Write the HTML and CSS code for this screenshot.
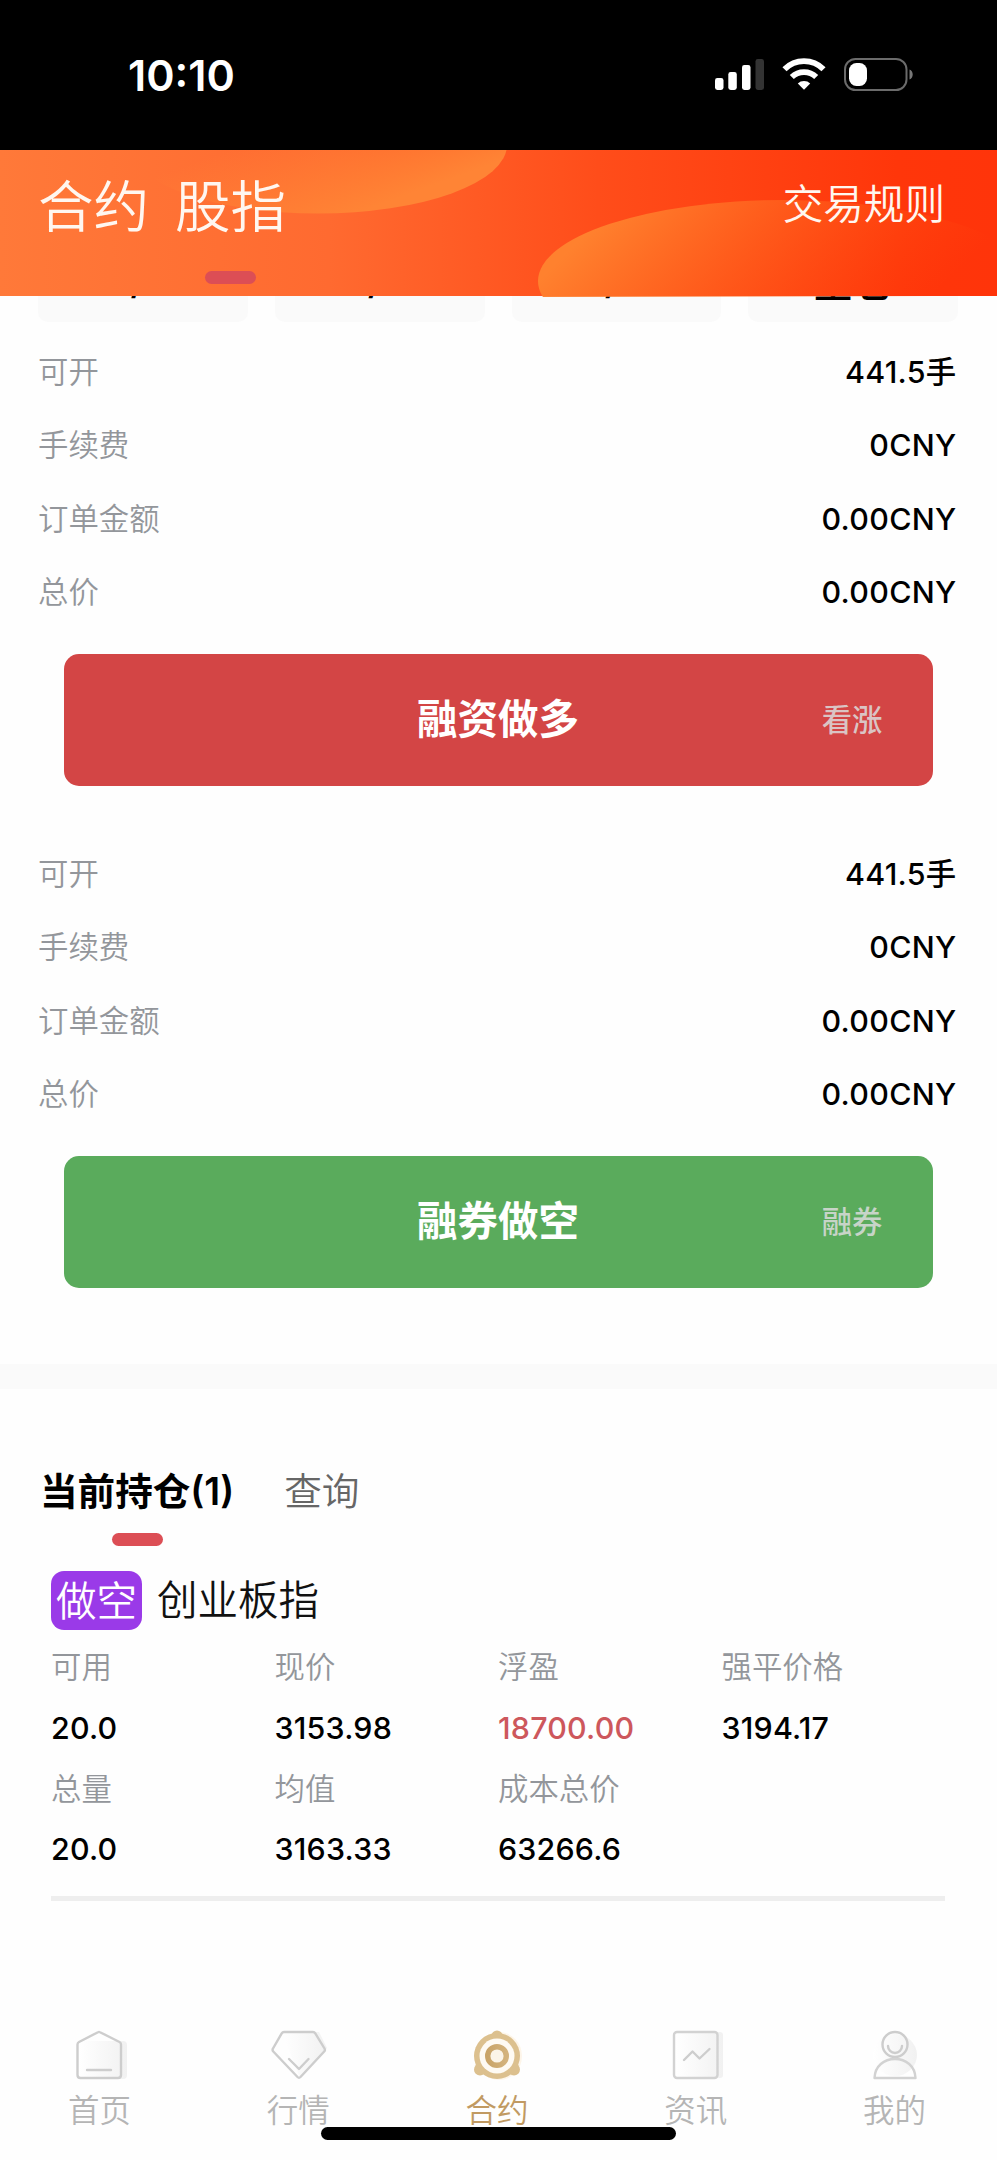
FILE: index.html
```html
<!DOCTYPE html>
<html lang="zh-CN">
<head>
<meta charset="utf-8">
<title>合约</title>
<link rel="stylesheet" href="styles.css">
</head>
<body>
<div class="status">
  <span class="time">10:10</span>
  <svg class="status-icons" width="200" height="34" viewBox="0 0 200 34">
    <g fill="#fff">
      <rect x="1" y="20" width="8.500" height="12" rx="2.4"/>
      <rect x="14.300" y="14" width="8.500" height="18" rx="2.4"/>
      <rect x="28" y="7" width="8.500" height="25" rx="2.4"/>
      <rect x="41.500" y="1" width="8.500" height="31" rx="2.4" fill="#333"/>
    </g>
    <g fill="none" stroke="#fff" stroke-width="5.800">
      <path d="M70.500 11.200a27.500 27.500 0 0 1 39 0"/>
      <path d="M77.800 19a17.500 17.500 0 0 1 24.400 0"/>
    </g>
    <path d="M83.800 25.400a9 9 0 0 1 12.400 0L90 31.800z" fill="#fff"/>
    <rect x="131" y="1" width="61.500" height="31" rx="10.500" fill="none" stroke="#6b6b6b" stroke-width="2"/>
    <rect x="135" y="5" width="18" height="23" rx="7.500" fill="#fff"/>
    <path d="M195.500 11.500c4.300 1.500 4.300 8.500 0 10z" fill="#777"/>
  </svg>
</div>

<header class="header">
  <svg class="header-art" width="997" height="147" viewBox="0 0 997 147">
    <defs>
      <linearGradient id="a1" x1="0.1" y1="0.5" x2="0.6" y2="1">
        <stop offset="0.2" stop-color="#ff8435" stop-opacity="0"/>
        <stop offset="1" stop-color="#ff8435"/>
      </linearGradient>
      <linearGradient id="a2" x1="0" y1="0.5" x2="0.75" y2="0.75">
        <stop offset="0" stop-color="#ff812e"/>
        <stop offset="1" stop-color="#ff5010" stop-opacity="0"/>
      </linearGradient>
    </defs>
    <ellipse cx="318" cy="-5" rx="189" ry="68.500" fill="url(#a1)"/>
    <ellipse cx="784" cy="131" rx="246" ry="81" fill="url(#a2)"/>
  </svg>
  <nav class="header-tabs">
    <span class="header-tab">合约</span>
    <span class="header-tab active">股指</span>
  </nav>
  <span class="rules">交易规则</span>
</header>

<main class="content">
  <div class="chips">
    <span class="chip ratio">1/4</span><span class="chip ratio">1/3</span><span class="chip ratio">1/2</span><span class="chip">全仓</span>
  </div>

  <section class="order">
    <div class="row"><span>可开</span><b>441.5手</b></div>
    <div class="row"><span>手续费</span><b>0CNY</b></div>
    <div class="row"><span>订单金额</span><b>0.00CNY</b></div>
    <div class="row"><span>总价</span><b>0.00CNY</b></div>
    <div class="action long"><span></span><strong>融资做多</strong><em>看涨</em></div>
  </section>

  <section class="order">
    <div class="row"><span>可开</span><b>441.5手</b></div>
    <div class="row"><span>手续费</span><b>0CNY</b></div>
    <div class="row"><span>订单金额</span><b>0.00CNY</b></div>
    <div class="row"><span>总价</span><b>0.00CNY</b></div>
    <div class="action short"><span></span><strong>融券做空</strong><em>融券</em></div>
  </section>

  <div class="band"></div>

  <div class="tabs">
    <span class="tab active">当前持仓(1)</span>
    <span class="tab">查询</span>
  </div>

  <section class="position">
    <div class="position-head"><span class="badge">做空</span><span class="name">创业板指</span></div>
    <div class="grid">
      <span>可用</span><span>现价</span><span>浮盈</span><span>强平价格</span>
      <b>20.0</b><b>3153.98</b><b class="gain">18700.00</b><b>3194.17</b>
      <span>总量</span><span>均值</span><span>成本总价</span><span></span>
      <b>20.0</b><b>3163.33</b><b>63266.6</b><b></b>
    </div>
  </section>
</main>

<footer class="nav">
  <svg width="0" height="0" class="defs"><defs>
    <linearGradient id="sh" x1="0" x2="1"><stop offset="0" stop-color="#fff"/><stop offset="1" stop-color="#f1f1f1"/></linearGradient>
    <linearGradient id="gold" x1="0" x2="1"><stop offset="0" stop-color="#c9a468"/><stop offset="1" stop-color="#d3b27c"/></linearGradient>
  </defs></svg>
  <a class="nav-item">
    <svg width="60" height="50" viewBox="0 0 60 50">
      <rect x="10" y="11" width="48" height="38" rx="4" fill="url(#sh)"/>
      <path d="M29 2.200q1-.6 2 0L50.500 12q1.500.8 1.500 2.500V45q0 3-3 3H11.500q-3 0-3-3V14.500q0-1.700 1.500-2.500z" stroke="#cdcdcd"/>
      <path d="M18 40h24" stroke="#cdcdcd"/>
    </svg>
    <span>首页</span>
  </a>
  <a class="nav-item">
    <svg width="60" height="50" viewBox="0 0 60 50">
      <path d="M14 2h37l8 16-27 30z" fill="url(#sh)"/>
      <path d="M16 2h29q1.500 0 2.300 1.300l9.200 15.200q1 1.600-.3 3L32.500 47q-1.500 1.500-3 0L5.300 21.500q-1.300-1.400-.3-3L13.700 3.300Q14.500 2 16 2z" stroke="#cdcdcd"/>
      <path d="M21 29L31 39l9.500-10" stroke="#cdcdcd"/>
    </svg>
    <span>行情</span>
  </a>
  <a class="nav-item current">
    <svg width="60" height="50" viewBox="0 0 60 50">
      <ellipse cx="32" cy="26" rx="23" ry="24" fill="#fdf5e9"/>
      <g fill="#dcc08e"><circle cx="30" cy="26" r="23"/><circle cx="30" cy="6" r="5.500"/><circle cx="13" cy="39.500" r="6"/><circle cx="47" cy="39.500" r="6"/></g>
      <circle cx="30" cy="26" r="17.500" fill="#fefaf3"/>
      <circle cx="30" cy="26" r="9.300" fill="#fbf4e8" stroke="url(#gold)" stroke-width="5.400"/>
    </svg>
    <span>合约</span>
  </a>
  <a class="nav-item">
    <svg width="60" height="50" viewBox="0 0 60 50">
      <rect x="10" y="2" width="47" height="46" rx="3" fill="url(#sh)"/>
      <rect x="8" y="2" width="43.500" height="46" rx="3" stroke="#d2d2d2"/>
      <path d="M18 30l8.500-8.500 7 7L43.500 19" stroke="#cdcdcd"/>
    </svg>
    <span>资讯</span>
  </a>
  <a class="nav-item">
    <svg width="60" height="50" viewBox="0 0 60 50">
      <ellipse cx="30" cy="25" rx="22" ry="21" fill="url(#sh)"/>
      <circle cx="30" cy="14.500" r="12.500" stroke="#cdcdcd"/>
      <path d="M23 16a7 7 0 0 0 14 0" stroke="#cdcdcd"/>
      <path d="M9.500 48C10 36 19 29 30 29s20 7 20.500 19z" stroke="#d2d2d2"/>
    </svg>
    <span>我的</span>
  </a>
  <div class="home-bar"></div>
</footer>
</body>
</html>
```

FILE: styles.css
```css
* { box-sizing: border-box; }
body {
  margin: 0;
  width: 997px;
  height: 2160px;
  overflow: hidden;
  display: flex;
  flex-direction: column;
  background: #fefefe;
  color: #000;
  font-family: Inter, "Noto Sans CJK SC", sans-serif;
  font-size: 30.4px;
}

.status {
  height: 149.5px;
  flex: none;
  display: flex;
  justify-content: space-between;
  align-items: center;
  padding: 0 83px 0 128px;
  background: #000;
}
.time { color: #fff; font-size: 43px; font-weight: 600; letter-spacing: 0; line-height: 60px; }

.header {
  position: relative;
  flex: none;
  height: 146.500px;
  display: flex;
  justify-content: space-between;
  padding: 0 52px 0 38px;
  background: linear-gradient(90deg, #ff7939 0%, #ff6a30 33%, #ff4d1a 60%, #ff360a 90%, #ff340a 100%);
  color: #fff7f0;
}
.header-art { position: absolute; left: 0; top: 0; }
.header-tabs { position: relative; display: flex; gap: 26px; font-size: 55.500px; font-weight: 350; }
.header-tab { display: flex; flex-direction: column; align-items: center; line-height: 114px; }
.header-tab.active::after { content: ""; margin-top: 7.500px; width: 51px; height: 13px; border-radius: 7px; background: #dc4e55; }
.rules { position: relative; font-size: 40.600px; font-weight: 350; line-height: 110px; }

.chips { display: flex; gap: 27px; height: 26px; overflow: hidden; align-items: flex-end; padding: 0 39px 0 38px; }
.chip { flex: 1; height: 78px; line-height: 77px; border-radius: 10px; background: #fafafa; text-align: center; font-size: 40.500px; font-weight: 500; }
.ratio { line-height: 72px; }

.order { padding: 14px 40.500px 0 38px; height: 502px; }
.row { display: flex; justify-content: space-between; align-items: center; height: 73.400px; line-height: 73.400px; }
.row span { color: #93969b; font-weight: 350; }
.row b { font-weight: 550; letter-spacing: 0.300px; }
.action {
  display: grid;
  grid-template-columns: 1fr auto 1fr;
  align-items: center;
  height: 132px;
  line-height: 130px;
  margin: 24px 24px 0 25.500px;
  border-radius: 15px;
  color: #fff;
}
.action strong { font-size: 40.500px; font-weight: 700; }
.action em { justify-self: end; margin-right: 50px; font-style: normal; font-weight: 500; color: rgba(220, 220, 220, 0.85); }
.long { background: #d34545; }
.short { background: #5aab5c; }

.band { height: 25px; margin-top: 38px; background: #fafafa; }

.tabs { display: flex; gap: 50px; padding: 75px 0 0 40px; font-size: 37.600px; line-height: 56px; color: #666; font-weight: 350; }
.tab { display: flex; flex-direction: column; align-items: center; }
.tab.active { color: #000; font-weight: 600; }
.tab.active::after { content: ""; margin-top: 13px; width: 51px; height: 13px; border-radius: 7px; background: #dc4e55; }

.position { margin: 25px 52px 0 51px; border-bottom: 5px solid #eee; height: 330px; }
.position-head { display: flex; align-items: center; gap: 15px; height: 59px; font-size: 40.500px; line-height: 61px; font-weight: 350; color: #111; }
.badge { width: 91px; height: 59px; text-align: center; border-radius: 13px; background: #9a3ae8; color: #fff; }
.grid { display: grid; grid-template-columns: repeat(4, 1fr); grid-auto-rows: 60.800px; line-height: 60.800px; margin-top: 7px; }
.grid span { color: #93969b; font-weight: 350; }
.grid b { font-weight: 550; letter-spacing: 0.200px; }
.grid .gain { color: #cd575c; }

.nav { position: relative; margin-top: auto; flex: none; height: 130px; display: grid; grid-template-columns: repeat(5, 1fr); padding-right: 3px; }
.defs { position: absolute; }
.nav-item { display: flex; flex-direction: column; align-items: center; gap: 8px; font-size: 31.500px; line-height: 46px; font-weight: 350; color: #b5b5b5; }
.nav-item svg { fill: none; stroke-width: 2.400; stroke-linecap: round; stroke-linejoin: round; }
.current { color: #c19a62; }
.home-bar { position: absolute; left: 321px; bottom: 20px; width: 355px; height: 13px; border-radius: 7px; background: #000; }
```
